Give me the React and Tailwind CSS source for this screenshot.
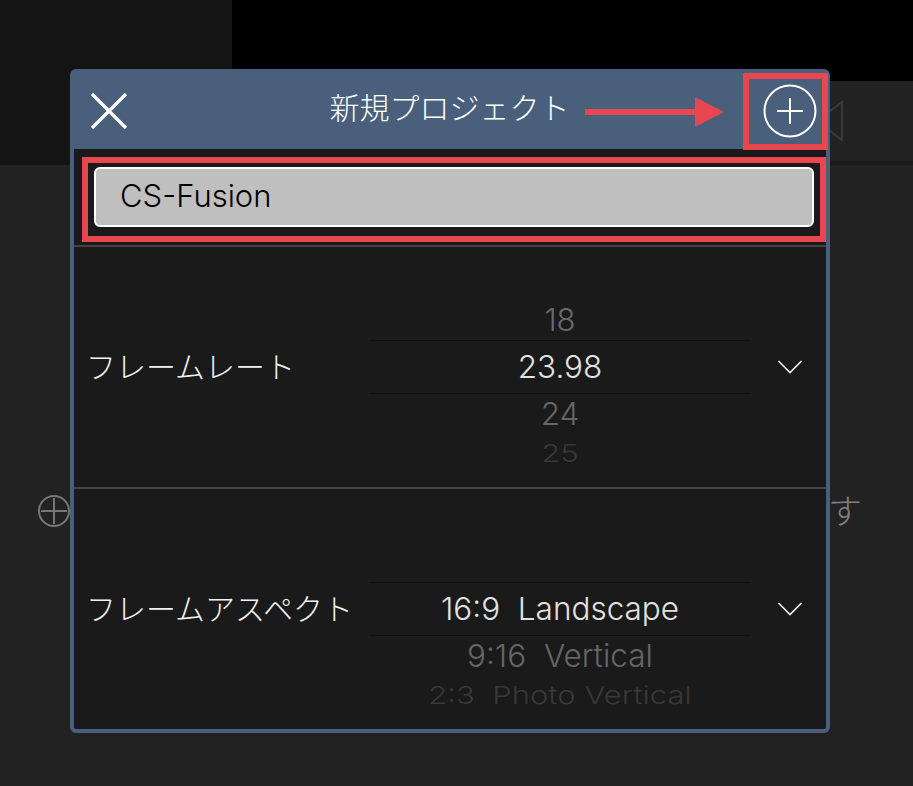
const JP = { fontFamily: 'Inter, "Noto Sans CJK JP", sans-serif' };

function Chevron() {
  return (
    <svg width="26" height="16" viewBox="0 0 26 16" fill="none" stroke="#eeeeee" strokeWidth="1.6">
      <path d="M1.5 2 L13 13.5 L24.5 2" />
    </svg>
  );
}

function Picker({ above, selected, below, last, top, lastScale }) {
  return (
    <div className={`w-[380px] flex flex-col items-center font-light ${top}`}>
      {above && <div className="h-[40px] flex items-center text-[31px] text-[#6a6a6a]">{above}</div>}
      <div className="w-full h-[54px] flex items-center justify-center border-y border-[#101010] text-[31.5px] text-[#e2e2e2] whitespace-pre">{selected}</div>
      <div className="h-[40px] flex items-center text-[31.5px] text-[#666666] whitespace-pre">{below}</div>
      <div className={`h-[38px] flex items-center text-[31px] text-[#383838] whitespace-pre ${lastScale}`}>{last}</div>
    </div>
  );
}

function Row({ label, ...picker }) {
  return (
    <div className="h-[240px] flex items-start pl-[12px]">
      <div className="w-[284px] h-[54px] mt-[93px] flex items-center text-[30px] font-light text-[#f2f2f2] whitespace-nowrap">{label}</div>
      <Picker {...picker} />
      <div className="h-[54px] mt-[93px] ml-[27px] flex items-center"><Chevron /></div>
    </div>
  );
}

export default function App() {
  return (
    <div className="relative w-[913px] h-[786px] overflow-hidden bg-[#222222] flex flex-col" style={JP}>
      <div className="h-[165px] flex">
        <div className="w-[232px] bg-[#141414]" />
        <div className="flex-1 flex flex-col">
          <div className="h-[81px] bg-black" />
          <div className="flex-1 flex items-center pl-[597px]">
            <svg width="14" height="42" viewBox="0 0 14 42" fill="none" stroke="#3a3a3a" strokeWidth="2">
              <path d="M-12 21 L13 2 L13 40 L-12 21" />
            </svg>
          </div>
          <div className="h-[4px] bg-[#1a1a1a]" />
        </div>
      </div>

      <div className="mt-[330px] h-[32px] flex items-center justify-between pl-[38px] pr-[51px]">
        <svg width="32" height="32" viewBox="0 0 32 32" fill="none" stroke="#777777" strokeWidth="2">
          <circle cx="16" cy="16" r="15" />
          <path d="M3 16 H29 M16 3 V29" />
        </svg>
        <span className="text-[34px] font-light text-[#808080] whitespace-nowrap">プロジェクトを作成します</span>
      </div>

      <div className="absolute left-[70px] top-[69px] w-[760px] h-[664px] rounded-[6px] border-4 border-[#4a5f7c] bg-[#1a1a1a] flex flex-col">
        <div className="relative h-[76px] shrink-0 bg-[#4a5f7c] flex items-center justify-between pl-[16px] pr-[9px]">
          <svg width="38" height="38" viewBox="0 0 38 38" fill="none" stroke="white" strokeWidth="3.2">
            <path d="M2 2 L36 36 M36 2 L2 36" />
          </svg>
          <span className="text-[30px] font-light text-white whitespace-nowrap mb-[5px] ml-[8px]">新規プロジェクト</span>
          <svg width="54" height="54" viewBox="0 0 54 54" fill="none" stroke="white" strokeWidth="2">
            <circle cx="27" cy="27" r="25.5" />
            <path d="M14 27 H40 M27 14 V40" />
          </svg>
        </div>

        <div className="h-[96px] shrink-0 pl-[20px] pr-[12px] pt-[18px]">
          <div className="h-[60px] rounded-[6px] border-2 border-white bg-[#bfbfbf] flex items-center pl-[24px] pb-[2px] text-[31px] font-light text-black">CS-Fusion</div>
        </div>

        <div className="h-[2px] shrink-0 bg-[#444444]" />
        <Row label="フレームレート" top="pt-[53px]" above="18" selected="23.98" below="24" last="25" lastScale="scale-y-[0.8]" />
        <div className="h-[2px] shrink-0 bg-[#444444]" />
        <Row label="フレームアスペクト" top="pt-[93px]" selected="16:9  Landscape" below="9:16  Vertical" last="2:3  Photo Vertical" lastScale="scale-y-[0.8]" />
      </div>

      <div className="absolute left-[743px] top-[73px] w-[85px] h-[77px] border-[6px] border-[#e8474f]" />
      <div className="absolute left-[82px] top-[157px] w-[744px] h-[85px] border-[6px] border-[#e8474f]" />
      <svg className="absolute left-[585px] top-[97px]" width="140" height="30" viewBox="0 0 140 30" fill="#e8474f">
        <path d="M0 12 H110 V0 L139 15 L110 30 V18 H0 Z" />
      </svg>
    </div>
  );
}
